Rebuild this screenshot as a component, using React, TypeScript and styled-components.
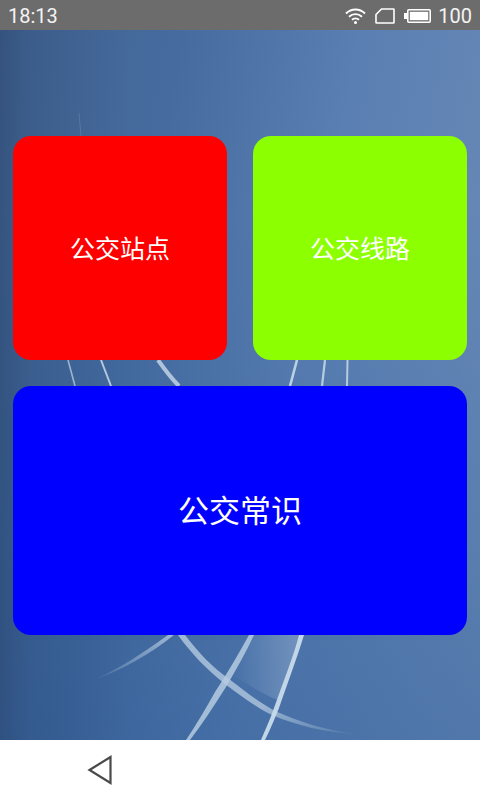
import React from "react";
import styled, { createGlobalStyle } from "styled-components";

const Global = createGlobalStyle`
  html, body { margin: 0; padding: 0; }
  body { width: 480px; height: 800px; overflow: hidden; font-family: "Roboto", "Noto Sans CJK SC", sans-serif; }
`;

const Screen = styled.div`
  width: 480px;
  height: 800px;
  display: flex;
  flex-direction: column;
`;

const StatusBar = styled.header`
  height: 30px;
  flex: none;
  background: #6c6c6c;
  color: #f4f4f4;
  display: flex;
  align-items: center;
  justify-content: space-between;
  padding: 2px 8px 0 8px;
  box-sizing: border-box;
  font-size: 20px;
  font-weight: 400;
`;

const StatusIcons = styled.div`
  display: flex;
  align-items: center;
  gap: 9px;
`;

const BatteryLevel = styled.span`
  margin-left: -2px;
`;

const Main = styled.main`
  position: relative;
  flex: 1;
  overflow: hidden;
  background:
    linear-gradient(90deg, rgba(30, 50, 80, 0.3) 0, rgba(30, 50, 80, 0.12) 30px, rgba(30, 50, 80, 0) 130px),
    linear-gradient(180deg, rgba(23, 73, 140, 0) 25%, rgba(23, 73, 140, 0.3) 100%),
    linear-gradient(100deg, #3f6191 0%, #466c9f 30%, #5a7fb2 60%, #6b8cb8 100%);
`;

const Backdrop = styled.svg`
  position: absolute;
  left: 0;
  top: 0;
`;

const Grid = styled.div`
  position: relative;
  display: grid;
  grid-template-columns: 214.5px 214.5px;
  grid-template-rows: 224px 249px;
  column-gap: 25.5px;
  row-gap: 26px;
  padding: 106px 0 0 12.75px;
`;

const Tile = styled.button<{ $color: string; $wide?: boolean }>`
  grid-column: ${(p) => (p.$wide ? "1 / span 2" : "auto")};
  border: 0;
  padding: 0 0 ${(p) => (p.$wide ? "4px" : "2px")};
  border-radius: 18px;
  background: ${(p) => p.$color};
  color: #fff;
  font-family: "Noto Sans CJK SC", sans-serif;
  font-weight: 400;
  font-size: ${(p) => (p.$wide ? "31px" : "25px")};
  line-height: 1;
  display: flex;
  align-items: center;
  justify-content: center;
`;

const NavBar = styled.nav`
  height: 60px;
  flex: none;
  background: #fff;
  display: flex;
  align-items: center;
  padding-left: 87px;
`;

const stroke = "#ffffff";

const Wifi = () => (
  <svg width="21" height="18" viewBox="0 0 21 18" fill="none" stroke={stroke} strokeWidth="1.9">
    <path d="M1 6.5C6.5 1.2 14.5 1.2 20 6.5" />
    <path d="M4 9.7C7.8 6.2 13.2 6.2 17 9.7" />
    <path d="M7 12.8C9 11 12 11 14 12.8" />
    <circle cx="10.5" cy="15.6" r="1.5" fill={stroke} stroke="none" />
  </svg>
);

const Sim = () => (
  <svg width="20" height="16" viewBox="0 0 20 16" fill="none" stroke={stroke} strokeWidth="1.6" strokeLinejoin="round">
    <path d="M6.5 1H18.5C18.8 1 19 1.2 19 1.5V14.5C19 14.8 18.8 15 18.5 15H1.5C1.2 15 1 14.8 1 14.5V6.5Z" />
  </svg>
);

const Battery = () => (
  <svg width="27" height="14" viewBox="0 0 27 14" fill="none">
    <rect x="3.8" y="0.8" width="22.4" height="12.4" rx="1" stroke={stroke} strokeWidth="1.6" />
    <rect x="5.8" y="2.8" width="18.4" height="8.4" fill={stroke} />
    <rect x="0" y="4" width="3" height="6" fill={stroke} />
  </svg>
);

const BackIcon = () => (
  <svg width="26" height="30" viewBox="0 0 26 30" fill="none" stroke="#4a4a4a" strokeWidth="2.2" strokeLinejoin="miter">
    <path d="M2.5 15L23.5 2V28Z" />
  </svg>
);

const Wallpaper = () => (
  <Backdrop width="480" height="710" viewBox="0 30 480 710">
    <defs>
      <linearGradient id="glow" x1="0" y1="0" x2="0.9" y2="0">
        <stop offset="0" stopColor="#a9c0da" stopOpacity="0" />
        <stop offset="1" stopColor="#a9c0da" stopOpacity="0.38" />
      </linearGradient>
      <linearGradient id="fadeA" x1="1" y1="0" x2="0" y2="1">
        <stop offset="0" stopColor="#b3c9df" stopOpacity="0.8" />
        <stop offset="1" stopColor="#b3c9df" stopOpacity="0.1" />
      </linearGradient>
      <linearGradient id="fadeB" x1="0" y1="0" x2="1" y2="1">
        <stop offset="0" stopColor="#a9c1da" stopOpacity="0.9" />
        <stop offset="0.6" stopColor="#a9c1da" stopOpacity="0.85" />
        <stop offset="1" stopColor="#a9c1da" stopOpacity="0.1" />
      </linearGradient>
    </defs>
    <path d="M250 635C244 650 238 662 232 675C244 682 262 694 278 700C284 680 294 655 302 635Z" fill="url(#glow)" />
    <path d="M168 635C140 655 120 668 96 679C122 670 150 654 174 635Z" fill="url(#fadeA)" />
    <path d="M185 635C198 652 212 667 229 679C245 691 258 702 275 711C300 722 325 730 354 734C325 732 298 726 272 715C255 707 240 695 225 684C207 670 190 652 178 635Z" fill="url(#fadeB)" />
    <path d="M249 635C238 655 228 672 215 692C206 708 196 725 186 740L190 740C202 724 214 706 226 687C236 670 246 652 254 635Z" fill="#b5cbe0" opacity="0.85" />
    <path d="M299 635C294 655 284 680 274 708C270 720 265 730 261 740L265 740C270 730 275 718 279 708C288 682 298 655 304 635Z" fill="#c8dbea" opacity="0.95" />
    <path d="M68 360L75 386" stroke="#b5c9de" strokeWidth="1.6" opacity="0.8" />
    <path d="M101 360L111 386" stroke="#c1d4e5" strokeWidth="2" opacity="0.9" />
    <path d="M158 360C165 370 171 378 179 386" stroke="#b9cde0" strokeWidth="4" opacity="0.9" fill="none" />
    <path d="M297 360L290 386" stroke="#c1d5e7" strokeWidth="2.6" opacity="0.95" />
    <path d="M325 360L322 386" stroke="#c1d5e7" strokeWidth="2.2" opacity="0.9" />
    <path d="M347.5 360L347 386" stroke="#c1d5e7" strokeWidth="2" opacity="0.9" />
    <path d="M79 113L81 136" stroke="#a9bfd8" strokeWidth="1" opacity="0.22" />
  </Backdrop>
);

export default function App() {
  return (
    <Screen>
      <Global />
      <StatusBar>
        <span>18:13</span>
        <StatusIcons>
          <Wifi />
          <Sim />
          <Battery />
          <BatteryLevel>100</BatteryLevel>
        </StatusIcons>
      </StatusBar>
      <Main>
        <Wallpaper />
        <Grid>
          <Tile $color="#ff0000">公交站点</Tile>
          <Tile $color="#8cff00">公交线路</Tile>
          <Tile $color="#0000ff" $wide>公交常识</Tile>
        </Grid>
      </Main>
      <NavBar>
        <BackIcon />
      </NavBar>
    </Screen>
  );
}
